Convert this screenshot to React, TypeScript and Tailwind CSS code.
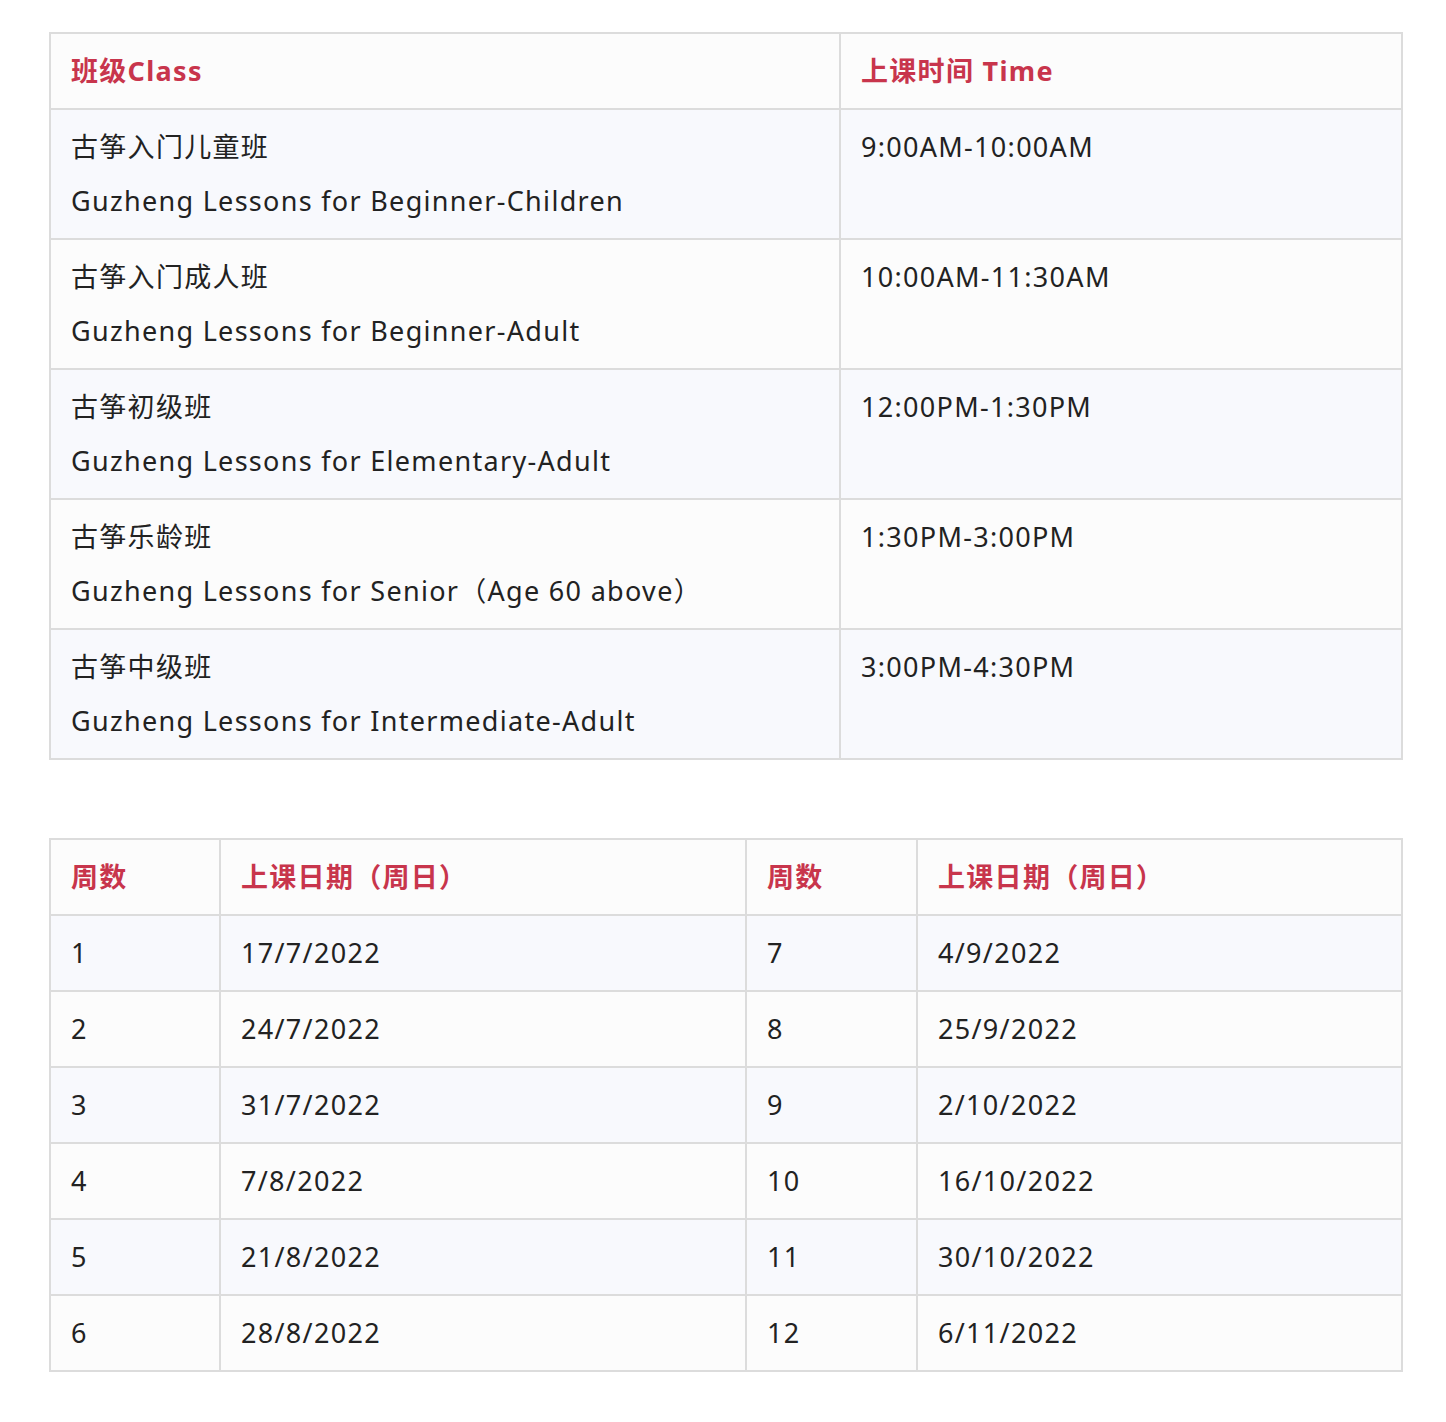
const classes = [
  ['古筝入门儿童班', 'Guzheng Lessons for Beginner-Children', '9:00AM-10:00AM'],
  ['古筝入门成人班', 'Guzheng Lessons for Beginner-Adult', '10:00AM-11:30AM'],
  ['古筝初级班', 'Guzheng Lessons for Elementary-Adult', '12:00PM-1:30PM'],
  ['古筝乐龄班', 'Guzheng Lessons for Senior（Age 60 above）', '1:30PM-3:00PM'],
  ['古筝中级班', 'Guzheng Lessons for Intermediate-Adult', '3:00PM-4:30PM'],
];

const dates = [
  ['1', '17/7/2022', '7', '4/9/2022'],
  ['2', '24/7/2022', '8', '25/9/2022'],
  ['3', '31/7/2022', '9', '2/10/2022'],
  ['4', '7/8/2022', '10', '16/10/2022'],
  ['5', '21/8/2022', '11', '30/10/2022'],
  ['6', '28/8/2022', '12', '6/11/2022'],
];

const th = 'border-2 border-[#dcdcdc] px-[20px] py-[10px] text-left font-bold text-[#c8354c] align-top';
const td = 'border-2 border-[#dcdcdc] px-[20px] py-[10px] align-top';

export default function App() {
  return (
    <div
      className="bg-white text-[#222] text-[27px] tracking-[1.3px] leading-[54px] px-[49px] pt-[32px] pb-[50px]"
      style={{ fontFamily: '"Noto Sans", "Noto Sans CJK SC", sans-serif' }}
    >
      <table className="w-[1354px] border-collapse">
        <thead>
          <tr className="bg-[#fcfcfc]">
            <th className={`${th} w-[790px]`}>班级Class</th>
            <th className={th}>上课时间 Time</th>
          </tr>
        </thead>
        <tbody>
          {classes.map((c, i) => (
            <tr key={i} className={i % 2 === 0 ? 'bg-[#f8f9fd]' : 'bg-[#fcfcfc]'}>
              <td className={td}>
                <div>{c[0]}</div>
                <div>{c[1]}</div>
              </td>
              <td className={td}>{c[2]}</td>
            </tr>
          ))}
        </tbody>
      </table>

      <table className="w-[1354px] border-collapse mt-[78px]">
        <thead>
          <tr className="bg-[#fcfcfc]">
            <th className={`${th} w-[170px]`}>周数</th>
            <th className={`${th} w-[526px]`}>上课日期（周日）</th>
            <th className={`${th} w-[171px]`}>周数</th>
            <th className={th}>上课日期（周日）</th>
          </tr>
        </thead>
        <tbody>
          {dates.map((d, i) => (
            <tr key={i} className={i % 2 === 0 ? 'bg-[#f8f9fd]' : 'bg-[#fcfcfc]'}>
              {d.map((v, j) => (
                <td key={j} className={td}>{v}</td>
              ))}
            </tr>
          ))}
        </tbody>
      </table>
    </div>
  );
}
